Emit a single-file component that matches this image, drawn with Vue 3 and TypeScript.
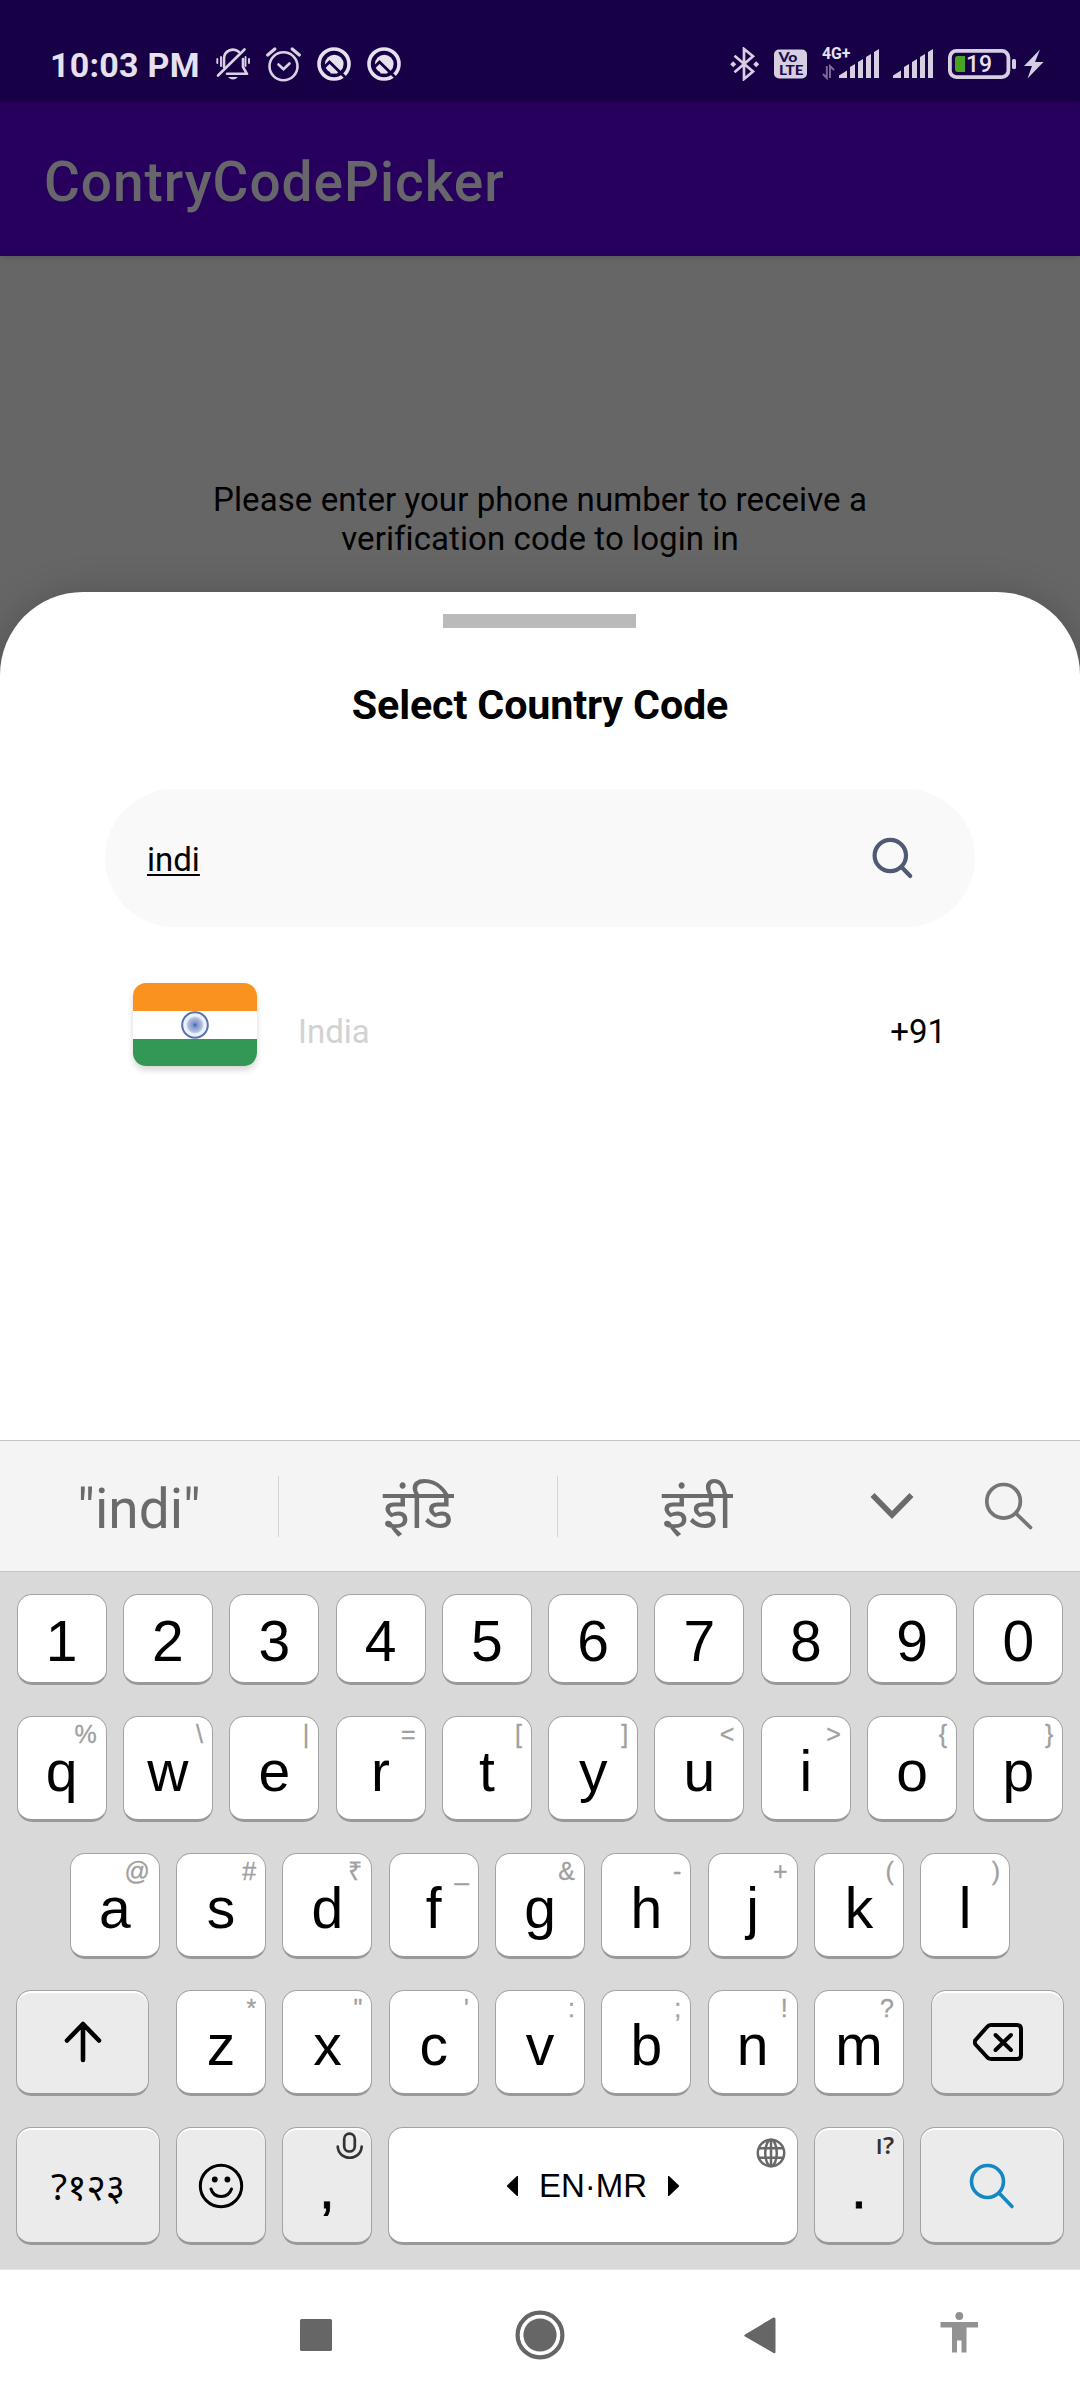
<script setup lang="ts">
interface Key {
  label: string
  hint?: string
}

const digits: Key[] = [...'1234567890'].map((label) => ({ label }))

const withHints = (letters: string, hints: string): Key[] =>
  [...letters].map((label, i) => ({ label, hint: [...hints][i] }))

const topRow = withHints('qwertyuiop', '%\\|=[]<>{}')
const homeRow = withHints('asdfghjkl', '@#₹_&-+()')
const bottomRow = withHints('zxcvbnm', '*"\':;!?')

const suggestions: string[] = ['"indi"', 'इंडि', 'इंडी']
</script>

<template>
  <div class="screen">
    <header class="status">
      <span class="clock">10:03 PM</span>
      <svg class="bell" width="34" height="34" viewBox="0 0 34 34">
        <g fill="none" stroke="#d9d2e4" stroke-width="2.6" stroke-linecap="round">
          <path d="M8 20V12a9 9 0 0 1 15-7M27 12v8l4 6.800H11" stroke-linejoin="round" />
          <path d="M2 28.500L28.500 2.500" />
          <path d="M1.300 12v4M5 10v9M29.500 10v9M33 12v4" stroke-width="1.900" />
        </g>
        <path d="M12 30h10q-5 5-10 0z" fill="#d9d2e4" />
      </svg>
      <svg class="alarm" width="35" height="35" viewBox="0 0 35 35">
        <g fill="none" stroke="#d9d2e4" stroke-linecap="round">
          <circle cx="17.500" cy="19.300" r="14" stroke-width="2.600" />
          <path d="M12.500 17.500l5 4.800 6-5.800" stroke-width="2.600" />
          <path d="M1.700 8L8.800 2M26.200 2l7.100 6" stroke-width="3.200" />
        </g>
      </svg>
      <svg v-for="n in 2" :key="n" class="ring" width="34" height="34" viewBox="0 0 34 34">
        <circle cx="17" cy="17" r="15" fill="none" stroke="#e6e1ee" stroke-width="3.600" />
        <circle cx="17.300" cy="17" r="9.300" fill="#e6e1ee" />
        <path d="M7.500 20l5-5L30 32" fill="none" stroke="#170046" stroke-width="2.800" />
        <path d="M12.500 20.500l8 6h-7z" fill="#e6e1ee" />
      </svg>
      <span class="grow"></span>
      <svg class="bt" width="30" height="34" viewBox="0 0 30 34">
        <path d="M4.500 8.800L23 24.500 14 32V2l9 7.300L4.500 25.200" fill="none" stroke="#d6cfe2" stroke-width="2.700" />
        <path d="M3.200 14.300l3 3-3 3-3-3zM26.200 14.300l3 3-3 3-3-3z" fill="#d6cfe2" />
      </svg>
      <svg class="volte" width="34" height="30" viewBox="0 0 34 30">
        <rect x="0" y="0.500" width="33" height="29" rx="5" fill="#d6cfe2" />
        <g fill="#1c0a4c" font-family="Lato, sans-serif" font-weight="900">
          <text x="4.500" y="13" font-size="13.500" textLength="19" lengthAdjust="spacingAndGlyphs">Vo</text>
          <text x="5" y="26" font-size="13.500" textLength="24.500" lengthAdjust="spacingAndGlyphs">LTE</text>
        </g>
      </svg>
      <svg class="sig4g" width="58" height="40" viewBox="0 -6 58 40">
        <text x="0" y="12.300" font-family="Roboto, sans-serif" font-weight="700" font-size="16" fill="#e6e1ee" textLength="28.500" lengthAdjust="spacingAndGlyphs">4G+</text>
        <path d="M4.800 19v12L1 27M8 31V19l4 4" fill="none" stroke="#7b6b99" stroke-width="1.900" />
        <path d="M17 31v-2.500l8-5V31zM28 31V20l5-3v14zM36 31V15l5-3v19zM44 31V10l5-3v24zM52 31V5l5-3v29z" fill="#d6cfe2" />
      </svg>
      <svg class="sig" width="41" height="34" viewBox="17 0 41 34">
        <path d="M17 31v-2.500l8-5V31zM28 31V20l5-3v14zM36 31V15l5-3v19zM44 31V10l5-3v24zM52 31V5l5-3v29z" fill="#d6cfe2" />
      </svg>
      <svg class="battery" width="96" height="34" viewBox="0 0 96 34">
        <rect x="1.900" y="3.900" width="58.500" height="26.200" rx="6.500" fill="none" stroke="#d6cfe2" stroke-width="3.800" />
        <rect x="64" y="12" width="4" height="10" rx="1.500" fill="#d6cfe2" />
        <path d="M9.500 9H17v16H9.500Q7 25 7 22V12q0-3 2.500-3z" fill="#4ba421" />
        <text x="18" y="25" font-family="Roboto, sans-serif" font-weight="500" font-size="23" fill="#e6e1ee" textLength="26">19</text>
        <path d="M92 2.500L76 19h8l-4.500 12.500L95.500 15H87z" fill="#d6cfe2" />
      </svg>
    </header>

    <div class="appbar">ContryCodePicker</div>

    <main class="content">
      <p class="prompt">Please enter your phone number to receive a<br />verification code to login in</p>
    </main>

    <section class="sheet">
      <div class="handle"></div>
      <h1>Select Country Code</h1>
      <div class="search">
        <span class="query">indi</span>
        <svg width="42" height="42" viewBox="0 0 42 42">
          <g fill="none" stroke="#505a74" stroke-width="4.200" stroke-linecap="round">
            <circle cx="18.300" cy="18.500" r="15.700" />
            <path d="M30 30.500l8.200 8.500" />
          </g>
        </svg>
      </div>
      <div class="country">
        <div class="flag">
          <span class="saffron"></span>
          <span class="white">
            <svg width="28" height="28" viewBox="0 0 28 28">
              <defs>
                <radialGradient id="spokes">
                  <stop offset="0" stop-color="#3a5ba8" />
                  <stop offset="0.200" stop-color="#7f96cc" />
                  <stop offset="0.600" stop-color="#b4c1e1" />
                  <stop offset="0.750" stop-color="#eef1f9" />
                  <stop offset="1" stop-color="#eef1f9" />
                </radialGradient>
              </defs>
              <circle cx="14" cy="14" r="12" fill="url(#spokes)" />
              <circle cx="14" cy="14" r="12.800" fill="none" stroke="#5573b5" stroke-width="2" />
            </svg>
          </span>
          <span class="green"></span>
        </div>
        <span class="name">India</span>
        <span class="dial">+91</span>
      </div>
    </section>

    <div class="suggest">
      <span v-for="s in suggestions" :key="s" class="word">{{ s }}</span>
      <svg class="chev" width="44" height="28" viewBox="0 0 44 28">
        <path d="M2.500 3l19.500 20L41.500 3" fill="none" stroke="#6b6b6b" stroke-width="5.600" />
      </svg>
      <svg class="find" width="48" height="48" viewBox="0 0 48 48">
        <g fill="none" stroke="#757575" stroke-width="3.700" stroke-linecap="round">
          <circle cx="18.600" cy="19.300" r="16.800" />
          <path d="M31 31.500L45.500 45.500" />
        </g>
      </svg>
    </div>

    <div class="keyboard">
      <div class="row digits">
        <div v-for="k in digits" :key="k.label" class="key">{{ k.label }}</div>
      </div>
      <div class="row">
        <div v-for="k in topRow" :key="k.label" class="key">{{ k.label }}<i>{{ k.hint }}</i></div>
      </div>
      <div class="row">
        <div v-for="k in homeRow" :key="k.label" class="key">{{ k.label }}<i>{{ k.hint }}</i></div>
      </div>
      <div class="row split">
        <div class="key fn wide">
          <svg width="38" height="42" viewBox="0 0 38 42">
            <path d="M19 39V3M3 19.500L19 3l16 16.500" fill="none" stroke="#000" stroke-width="4.600" stroke-linecap="round" stroke-linejoin="round" />
          </svg>
        </div>
        <div class="letters">
          <div v-for="k in bottomRow" :key="k.label" class="key">{{ k.label }}<i>{{ k.hint }}</i></div>
        </div>
        <div class="key fn wide">
          <svg width="50" height="38" viewBox="0 0 50 38">
            <g fill="none" stroke="#000" stroke-linecap="round" stroke-linejoin="round">
              <path d="M18 2H44q4 0 4 4v26q0 4-4 4H18q-2.500 0-4-2L2.500 21.500q-1.500-2.500 0-4.500L14 4q1.500-2 4-2z" stroke-width="4" />
              <path d="M22.500 12l15.500 15M38 12L22.500 27" stroke-width="4" />
            </g>
          </svg>
        </div>
      </div>
      <div class="row last">
        <div class="key fn sym">?१२३</div>
        <div class="key fn">
          <svg width="46" height="46" viewBox="0 0 46 46">
            <circle cx="23" cy="23" r="20.700" fill="none" stroke="#000" stroke-width="3" />
            <circle cx="16.800" cy="16.500" r="2.900" />
            <circle cx="29.400" cy="16.500" r="2.900" />
            <path d="M13 26c3 10 17 10 20.500 0" fill="none" stroke="#000" stroke-width="3" stroke-linecap="round" />
          </svg>
        </div>
        <div class="key fn point">,
          <svg class="mic" width="28" height="28" viewBox="0 0 28 28">
            <g fill="none" stroke="#333" stroke-width="2.700" stroke-linecap="round">
              <rect x="8.200" y="1.700" width="10.600" height="17.800" rx="5.300" />
              <path d="M1.700 14.500c1 15 23 15 24 0" />
            </g>
          </svg>
        </div>
        <div class="key space">
          <svg width="11" height="20" viewBox="0 0 11 20"><path d="M11 0v20h-1L0 10.500v-1L10 0z" /></svg>
          <span>EN·MR</span>
          <svg width="11" height="20" viewBox="0 0 11 20"><path d="M0 0v20h1l10-9.500v-1L1 0z" /></svg>
          <svg class="globe" width="30" height="30" viewBox="0 0 30 30">
            <g fill="none" stroke="#686868" stroke-width="2.500">
              <circle cx="15" cy="15" r="13.200" />
              <ellipse cx="15" cy="15" rx="5.800" ry="13.200" />
              <path d="M15 2v26M3 10.300h24M3 19.700h24" />
            </g>
          </svg>
        </div>
        <div class="key fn point">.<b>।?</b></div>
        <div class="key fn sym">
          <svg width="46" height="48" viewBox="0 0 46 48">
            <g fill="none" stroke="#1587c1" stroke-width="3.600" stroke-linecap="round">
              <circle cx="18.500" cy="19.500" r="16" />
              <path d="M30.500 31.500L43 44.500" />
            </g>
          </svg>
        </div>
      </div>
    </div>

    <nav>
      <svg class="recent" width="32" height="32" viewBox="0 0 32 32"><rect width="32" height="32" rx="1.500" fill="#666" /></svg>
      <svg class="home" width="50" height="50" viewBox="0 0 50 50">
        <circle cx="25" cy="25" r="22.400" fill="none" stroke="#666" stroke-width="4.200" />
        <circle cx="25" cy="25" r="16.600" fill="#666" />
      </svg>
      <svg class="back" width="32" height="37" viewBox="0 0 32 37">
        <path d="M29.500 .500Q31.500 0 31.500 2v33q0 2-2 1L1 19.500q-1.500-1 0-2z" fill="#666" />
      </svg>
      <svg class="person" width="38" height="41" viewBox="0 0 38 41">
        <circle cx="19.300" cy="4" r="3.900" fill="#929292" />
        <path d="M.500 10H38v5.500H26.500V40.500H21.500V28.500H17V40.500H12V15.500H.500z" fill="#929292" />
      </svg>
    </nav>
  </div>
</template>

<style>
body {
  margin: 0;
}
</style>

<style scoped>
.screen {
  width: 1080px;
  height: 2400px;
  display: flex;
  flex-direction: column;
  overflow: hidden;
  background: #666;
  font-family: Roboto, "Noto Sans", sans-serif;
}
svg {
  display: block;
  flex: none;
}
.status {
  height: 102px;
  flex: none;
  box-sizing: border-box;
  padding: 47px 36px 0 50px;
  background: #170046;
  display: flex;
  align-items: flex-start;
}
.clock {
  width: 166px;
  font-size: 34px;
  font-weight: 700;
  letter-spacing: 0.25px;
  line-height: 36px;
  color: #e6e1ee;
  white-space: nowrap;
}
.alarm {
  margin-left: 16px;
}
.ring {
  margin-left: 16px;
}
.grow {
  flex: 1;
}
.volte {
  margin: 2px 0 0 14px;
}
.sig4g {
  margin: -6px 0 0 14px;
}
.sig {
  margin-left: 13px;
}
.battery {
  margin-left: 14px;
}
.appbar {
  height: 154px;
  flex: none;
  padding-left: 44px;
  background: #27005e;
  color: #67666b;
  font-size: 55px;
  font-weight: 500;
  letter-spacing: 0.95px;
  line-height: 160px;
  box-sizing: border-box;
  box-shadow: 0 1px 6px rgba(0, 0, 0, 0.16);
}
.content {
  height: 336px;
  flex: none;
}
.prompt {
  margin: 224px 0 0;
  font-size: 33px;
  letter-spacing: 0.08px;
  line-height: 39px;
  text-align: center;
  color: #000;
}
.sheet {
  height: 848px;
  flex: none;
  box-sizing: border-box;
  padding-top: 22px;
  background: #fff;
  border-radius: 83px 83px 0 0;
  box-shadow: 0 4px 40px rgba(0, 0, 0, 0.22);
}
.handle {
  width: 193px;
  height: 14px;
  margin: 0 0 0 443px;
  background: #bababa;
}
h1 {
  margin: 45px 0 0;
  font-size: 41.25px;
  font-weight: 700;
  letter-spacing: -0.15px;
  line-height: 64px;
  text-align: center;
  color: #000;
}
.search {
  width: 870px;
  height: 138px;
  margin: 52px auto 0;
  padding: 0 61px 0 42px;
  box-sizing: border-box;
  border-radius: 69px;
  background: #f9f9f9;
  display: flex;
  align-items: center;
  justify-content: space-between;
}
.query {
  margin-top: 3px;
  font-size: 33px;
  line-height: 39px;
  text-decoration: underline;
  text-decoration-thickness: 2px;
  text-underline-offset: 3px;
}
.country {
  margin: 56px 134px 0 133px;
  height: 83px;
  display: flex;
  align-items: flex-start;
  font-size: 33px;
  line-height: 39px;
}
.flag {
  width: 124px;
  height: 83px;
  display: flex;
  flex-direction: column;
  border-radius: 13px;
  overflow: hidden;
  box-shadow: 0 4px 6px rgba(0, 0, 0, 0.16);
}
.saffron {
  height: 28px;
  background: #fa921f;
}
.white {
  flex: 1;
  display: flex;
  align-items: center;
  justify-content: center;
  background: #fff;
}
.green {
  height: 27px;
  background: #339755;
}
.name {
  margin: 29px 0 0 41px;
  color: #d2d2d2;
}
.dial {
  margin: 29px 0 0 auto;
}
.suggest {
  height: 132px;
  flex: none;
  box-sizing: border-box;
  border-top: 1px solid #c4c4c4;
  border-bottom: 1px solid #c4c4c4;
  background: #f4f4f4;
  display: flex;
  align-items: center;
}
.word {
  width: 279px;
  height: 61px;
  box-sizing: border-box;
  border-right: 1px solid #d6d6d6;
  font-size: 55px;
  line-height: 66px;
  text-align: center;
  color: #6b6b6b;
}
.word:nth-child(3) {
  border-right-color: transparent;
}
.chev {
  margin-left: 33px;
}
.find {
  margin-left: 71px;
}
.keyboard {
  height: 698px;
  flex: none;
  box-sizing: border-box;
  padding: 22px 16px 0;
  background: #d9d9d9;
  border-bottom: 1px solid #e6e6e6;
  display: flex;
  flex-direction: column;
  gap: 31px;
  font-family: "Liberation Sans", "Noto Sans", sans-serif;
}
.row {
  height: 106px;
  display: flex;
  justify-content: center;
  gap: 16.3px;
}
.digits {
  height: 91px;
}
.last {
  height: 118px;
  gap: 16px;
}
.split {
  justify-content: space-between;
}
.letters {
  display: flex;
  gap: 16.3px;
}
.key {
  position: relative;
  width: 90px;
  flex: none;
  box-sizing: border-box;
  border: 1px solid #a3a3a3;
  border-bottom: 3px solid #999;
  border-radius: 15px;
  background: #fff;
  padding-top: 6px;
  display: flex;
  align-items: center;
  justify-content: center;
  font-size: 57px;
  line-height: 60px;
  color: #000;
}
.digits .key {
  padding-top: 4px;
}
.fn {
  background: #ebebeb;
  box-shadow: inset 0 2px 0 #fff;
}
.key > i {
  position: absolute;
  top: 1px;
  right: 9px;
  font-size: 25px;
  font-style: normal;
  line-height: 32px;
  color: #a0a0a0;
  -webkit-text-stroke: 0.3px #a0a0a0;
}
.wide {
  width: 133px;
  padding-top: 0;
}
.last .key {
  padding-top: 2px;
}
.last .point {
  padding-top: 6px;
  -webkit-text-stroke: 0.8px #000;
}
.sym {
  width: 144px;
  font-family: "Noto Sans", sans-serif;
  font-size: 37px;
}
.space {
  width: 410px;
  gap: 21px;
  font-size: 33px;
  line-height: 40px;
}
.mic {
  position: absolute;
  top: 4px;
  right: 7px;
}
.globe {
  position: absolute;
  top: 10px;
  right: 11px;
}
.key > b {
  position: absolute;
  top: 1px;
  right: 9px;
  font-family: "Noto Sans", sans-serif;
  font-size: 24px;
  font-weight: 600;
  line-height: 32px;
  color: #333;
  -webkit-text-stroke: 0;
}
nav {
  height: 130px;
  flex: none;
  background: #fff;
  display: flex;
  align-items: center;
}
.recent {
  margin-left: 300px;
}
.home {
  margin-left: 183px;
}
.back {
  margin-left: 179px;
}
.person {
  margin-left: 164px;
  margin-top: -5px;
}
</style>
